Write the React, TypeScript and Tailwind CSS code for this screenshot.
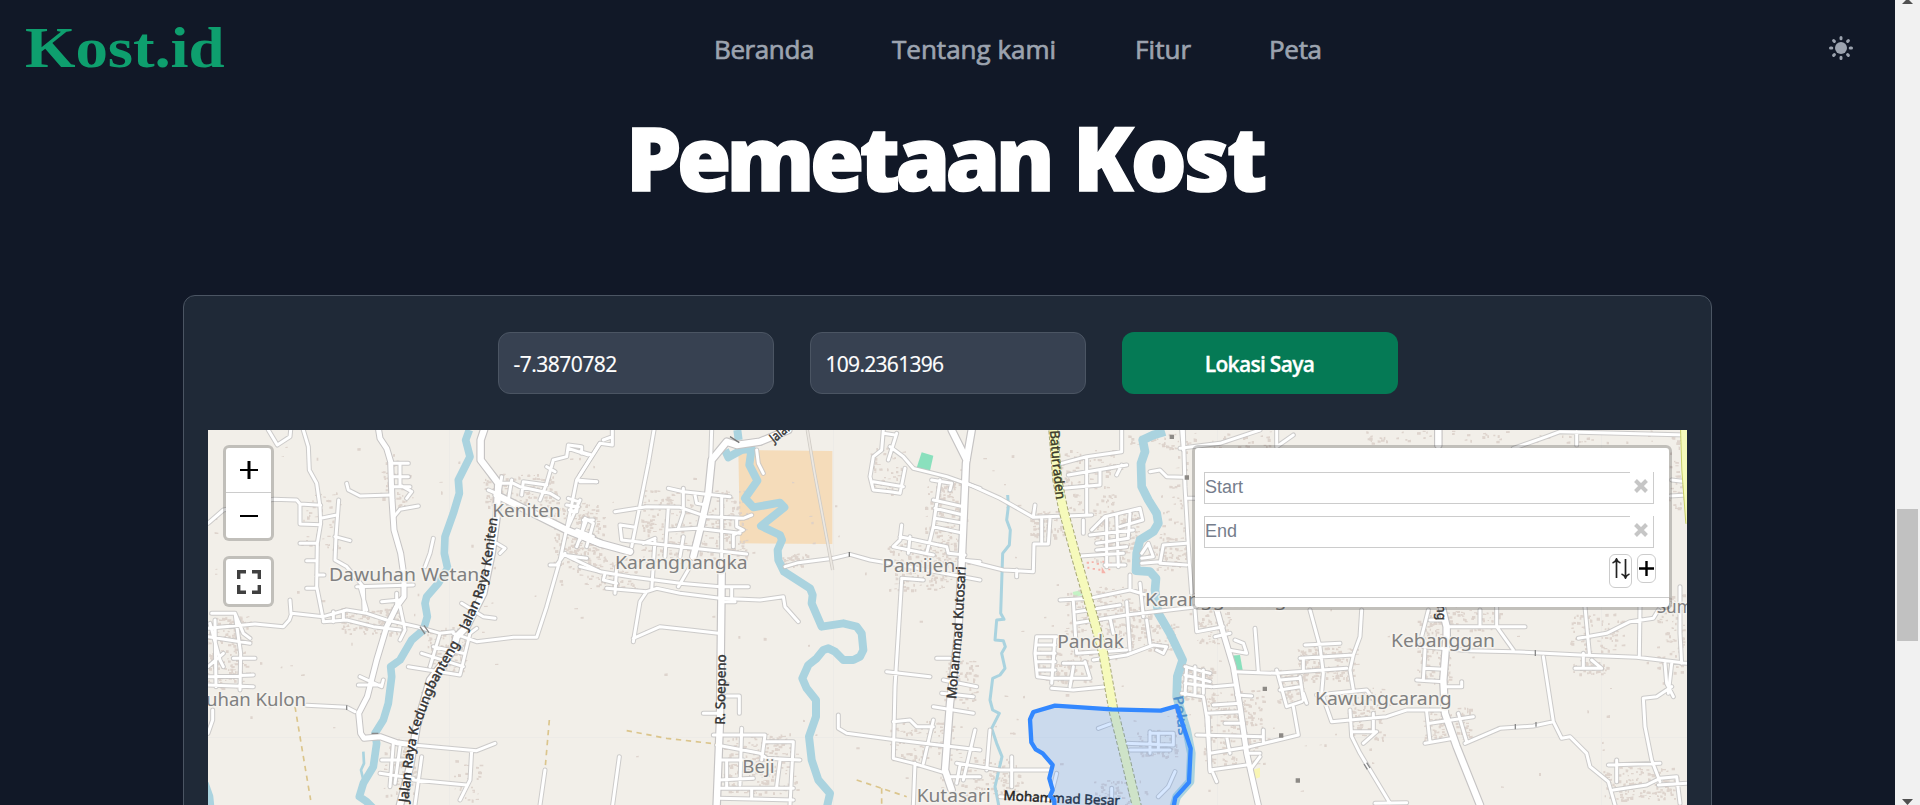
import React from "react";

type Tile = {
  x: number;
  major: string;
  mid: string;
  minor: string;
  towns: [number, number, number, number, number][];
};

const TILES: Tile[] = [
  {
    x: 200,
    major:
      "M852 30L842 60V120L880 170L895 190L890 290L875 400L850 520L800 620L770 650L760 690L690 780L650 920L630 1040L600 1155M890 225L1000 280L1100 330L1200 370",
    mid: "M536 30L540 55L560 85L572 125L576 240L582 330L602 400L612 470V530L590 560L560 620L530 720L502 830L476 880L482 940L492 955L540 950L590 968L640 975",
    minor:
      "M205 30L232 75L270 50L272 30M310 30L325 80L328 150L350 190L360 260L362 310L352 370L350 500L370 600M24 310L70 270L220 238L290 240L300 252L362 256M300 252V312L362 314M362 295L410 285M416 240L408 350L405 420L440 440L490 500L492 570M405 350L450 362M300 370H350M320 422H350M350 465H372M320 505H350M440 190L445 210L480 228L572 225M580 130H625M600 130V195L635 215L620 235M576 170H625M576 200H630M582 290L600 268L655 258M470 500L640 495M545 545L600 540M24 625L165 612L250 620L268 600L275 580L370 590L440 570L500 580L560 600L650 620L720 640L760 635M273 580L270 540M370 605L440 600L520 620L600 630M430 572V600M400 575V605M480 500L500 570M590 520V560M600 560L615 630L600 660M35 580H105L130 640L150 655M30 610L60 720L70 740M24 650L150 670M24 770L160 765M24 795L160 800M105 580L122 700L120 810M45 600L48 800M100 715H165M24 740L70 700M320 856L440 862L465 875M24 940L38 900V870M700 355L690 400L675 440M785 550L850 590L885 595M760 640L830 665L940 652L1010 652L1040 560L1080 420L1110 280L1130 180L1200 70M1130 180L1190 185M1095 400L1070 435H1050M1085 400L1200 455M1105 235L1135 245L1130 275L1108 270M1100 255L1135 260M895 190L940 190L960 200L1050 220L1075 235M970 185L965 225M970 185L1040 195M1040 190L1020 240M1040 190L1060 120L1100 110L1105 75L1145 80V100M1105 85L1165 105M1040 140L1065 155M905 170L895 230M935 180L925 240M865 210L900 225M1100 330L1140 240M1160 300L1130 380M1150 300H1180M1130 330L1180 350M1085 405L1160 415M720 640L690 740M665 700L790 740M625 740L780 765L810 640L830 625M700 680L790 700M890 370L915 385L900 400M640 975L830 992L885 970M815 992L810 1080L780 1140M640 1080L800 1095M580 970L570 1100M540 1060L640 1075M665 1010L645 1155M600 980L585 1090M545 1020H620M1035 1050L1020 1155M480 770L545 800L550 780M475 795H545",
    towns: [
      [590, 190, 50, 70, 30], [360, 300, 60, 90, 25], [80, 690, 70, 110, 90], [510, 600, 90, 40, 70],
      [960, 210, 110, 50, 70], [1130, 350, 70, 100, 80], [740, 690, 60, 70, 60], [600, 1040, 50, 90, 50],
      [800, 1080, 40, 60, 15], [600, 500, 560, 430, 30],
    ],
  },
  {
    x: 580,
    major:
      "M340 410L360 330L385 220L395 120L440 65L470 75L540 65L625 30M425 460L420 900L410 1155M1175 30L1158 130L1155 200L1145 430L1135 640L1110 850L1095 1050L1115 1110M1115 30L1160 120M0 345L60 370L150 395",
    mid: "",
    minor:
      "M222 30L205 130L155 380M97 30V75L60 70L0 165M97 50L70 60M0 95L35 105M0 185H50M395 30L392 120M265 205L310 215L450 230M345 225L350 250L380 255M105 275L200 260L300 262L380 290L490 295L515 285M265 262L255 410M310 205V280L295 325M265 330L350 325L480 340M120 315L125 360L340 385L500 402M120 315L165 322M425 230V460M470 300V320L490 330L460 345V380M190 370L225 355M0 440L60 455L150 470L300 490L420 500H505M80 505L200 515L230 505L300 520L420 535L540 540L610 530L615 560L655 605M200 515L180 545L160 665M160 655L240 620L330 630L415 640M225 360L215 510M110 440L105 520M310 350L300 410M330 440L295 500M75 460L70 480L110 490M455 500V530M430 545H465M15 295L0 360M15 295L40 310L20 380M615 440L655 428L760 415L810 403L870 420L960 435L1200 480M530 90L535 130L550 160M910 30L905 90L880 110L870 170L880 210L930 215M930 80L970 110L1000 145L1100 170L1200 205M950 40L925 120M910 40L945 45M975 145L960 220L930 215M880 185L970 200M1080 180L1060 320L1040 400M1060 240L1150 260M1065 265L1150 285M1065 295L1150 310M1060 320L1150 340M1055 180L1115 190L1110 210M965 315L960 360L940 380L1060 405M960 350L1100 380L1105 400L1155 405M990 350L985 400M1140 420L1200 425M965 480L955 640L945 800L940 1015L1000 1030L1100 1060M965 475L1030 480M920 755L1050 770M775 885V925L800 940L950 960L1200 990M1090 780L1190 800M1085 820L1180 830M1060 860L1180 880M1005 1030L1000 1155M940 905L990 900L1010 920L1060 920M1060 900L1030 1030M1185 930L1150 1080M1110 1070H1200M1070 715H1110M440 828H478V880M370 880H415M400 945L555 945L545 1020M410 975L540 1000L560 1015L660 1020M485 925L480 1095M415 1080L520 1075M415 1020H490M415 1105L640 1105M415 1135L640 1140M555 965H640L630 1155M515 1105V1130M440 1025V1100M600 1020L590 1100M118 1010L98 1155",
    towns: [
      [340, 320, 160, 110, 170], [90, 460, 80, 50, 45], [20, 340, 50, 60, 30], [540, 1030, 110, 90, 120],
      [1010, 440, 90, 70, 70], [920, 150, 50, 70, 25], [1110, 280, 45, 100, 60], [1140, 780, 50, 60, 30],
      [1030, 960, 100, 60, 50], [640, 420, 40, 20, 20], [600, 600, 580, 480, 22],
    ],
  },
  {
    x: 940,
    major: "",
    mid: "",
    minor:
      "M80 190L180 235L280 292L455 285M285 255L280 290M70 420L190 450L280 455L282 372H325L330 295M305 295V365M230 450V470M365 130L440 110L545 95V30M440 110V285M385 165L560 135M370 205L480 195V150M545 135L530 165M455 330L495 290L600 265L608 300L540 320M500 290V440M530 285L535 440M570 280L565 350M450 345L580 330M470 370L565 355M470 390L560 380M420 408L550 400M495 435H555M430 300V340M360 540L450 535L570 510L620 525M570 510V465M400 545L410 700L560 690M405 610L560 585L770 560M510 595L520 640M560 545L570 690M410 575L540 555M600 490L610 590M620 600L630 670M460 720L560 705L640 675L680 680L670 700L650 690M290 650L285 700L292 770L330 775L450 775M290 650H350M290 675H345M290 700H345M290 725H345M290 750H345M345 650L335 790M335 805L400 810L500 800M400 740L390 800M435 725L450 775M370 730H435M730 30L735 200L748 430L755 520M630 155L660 150L680 170L730 172M740 235H765M605 400L625 370L640 410L605 415M670 375L740 370M670 375L660 430L740 435M605 430L660 425M735 740L810 760M735 765L810 785M735 790L815 800M740 740L735 825M765 740V820M790 750V820M725 820L790 830L800 890L810 1055M475 925L510 912M555 970L700 975M570 990L690 990M630 935V1000M655 940V990M630 940H700V975M705 1055L685 1100L655 1130M515 1105V1155M50 1030L180 1050L330 1050M215 1010V1100M150 930L140 1050M180 1130L350 1140M60 1035L50 1090M350 1060L340 1100",
    towns: [
      [440, 180, 90, 90, 60], [320, 310, 50, 40, 40], [530, 350, 70, 80, 90], [500, 570, 130, 70, 100],
      [370, 740, 80, 50, 60], [620, 650, 90, 40, 50], [690, 400, 50, 50, 30], [770, 790, 50, 50, 70],
      [650, 970, 60, 40, 50], [540, 1120, 80, 40, 30], [120, 1070, 120, 60, 60], [0, 330, 50, 150, 45],
      [700, 250, 40, 200, 30], [400, 600, 350, 500, 30],
    ],
  },
  {
    x: 1180,
    major: "M775 30V75M785 560L800 620V650L790 780L795 880L830 980L900 1155",
    mid: "M105 550L130 640L160 740L180 860L200 1000L235 1155",
    minor:
      "M5 30L10 90M0 85L120 70L240 30M290 30V80L340 45M45 570L50 635L130 620M105 650L150 640M145 690L200 700L190 670L165 660M225 625L235 755M160 755L290 760L500 745M290 750L320 860L365 845M360 770L370 840M340 860L355 945L210 980L90 1000M300 780L360 775M300 810L360 800M375 675L480 670M360 715L520 705L510 750L520 810M370 715V755M390 570L420 680L430 760L425 820M545 570L540 650L520 705M425 820L455 905L510 900L620 890L680 870L790 870M510 870L515 950L540 1000L630 1150M580 880V935M515 935H590L550 970M585 1150L680 1148M370 820L380 850M410 825L560 810L590 850M80 880L180 875M100 855L180 850M100 800L160 795M135 910L190 910M50 945L250 950M250 930V970M85 890L90 1050L200 1035M140 950L150 1000M170 825L215 828M205 1000H240M210 1050L240 1010M95 1050L110 1085M805 620H1035M950 560V620L1000 690M900 570V615M725 650L745 570M750 600H790M730 680L870 692L1000 695L1200 705L1370 712L1521 730M735 690L730 780M735 745L790 748M710 780L790 785M800 800L845 800V785M1215 560L1228 700M1380 560L1378 712M1195 655L1280 640L1350 605L1420 595L1435 570M1500 500V640L1505 730M1475 730L1465 820M1455 730L1460 790L1480 830M1475 800L1430 830L1390 835L1395 920L1415 1020L1440 1085M1090 710L1120 905L1145 955L1170 950L1220 1000L1230 1040L1285 1085L1305 1155M855 970L960 925L1060 918L1120 905M740 875L750 965M750 910L880 890M735 970L820 955M835 880L860 965M1285 1035L1440 1030M1310 1020V1085M1300 1110L1400 1095L1440 1075L1490 1070L1500 1150M1435 1095L1521 1090M1185 745H1265L1235 720M1210 700V745M1000 85L1100 50L1140 35L1521 45M1190 35V75M1475 180L1521 185M1470 228L1521 225",
    towns: [
      [100, 620, 50, 50, 35], [160, 920, 90, 110, 110], [330, 800, 40, 50, 40], [440, 730, 90, 50, 90],
      [560, 880, 50, 80, 60], [760, 700, 50, 100, 60], [800, 910, 70, 50, 60], [850, 600, 110, 30, 45],
      [1250, 640, 80, 60, 40], [1470, 640, 40, 120, 50], [1380, 1090, 110, 50, 80], [1230, 740, 50, 20, 20],
      [60, 60, 220, 25, 35], [1490, 160, 25, 110, 25], [1000, 50, 450, 20, 30], [760, 800, 720, 330, 30],
    ],
  },
];

const WATER: [number, number, string][] = [
  [200, 23, "M808 30L797 60L810 110L775 180L778 220L760 280L735 350L733 400L743 445L715 490L680 530L675 550L682 590L670 630L635 660L600 720L572 740L575 770L565 850L550 900L525 940L530 970L520 1040L490 1090L478 1130L500 1145L525 1170"],
  [200, 8, "M490 995L492 1030L483 1050L490 1080"],
  [200, 24, "M14 1090L28 1130L32 1170"],
  [580, 24, "M472 30L476 60M435 90L445 112L485 90L515 85L508 135L532 182L495 235L520 262L600 248L613 262L543 318L600 345L606 360L593 390L595 420L612 455L690 505L698 525L695 550L725 620L790 610L830 620L845 640L850 690L840 710L820 720L790 720L765 695L745 685L730 690L710 715L685 735L667 775L680 805L708 840V890L687 950L695 1020L715 1080L750 1120L740 1165"],
  [940, 26, "M675 35L640 45L608 60L615 95L603 130L605 200L625 240L650 280L655 310L640 335L600 360L590 400L588 452L630 455L648 475L645 510L655 580L690 640L728 720L712 770L710 830L740 930L754 1000L750 1085L710 1130L700 1165"],
  [940, 9, "M203 225L205 260L200 300L211 330L208 375L188 400L182 580L192 598L170 600L165 660L190 662L196 680L185 700L195 745L180 765L158 775L150 840L158 870L178 880L155 925L170 970L186 1010L165 1100L178 1165"],
];

const PLACES: [number, number, number, number, string][] = [
  [200, 877, 290, 205, "Keniten"],
  [200, 387, 482, 451, "Dawuhan Wetan"],
  [200, 18, 857, 300, "uhan Kulon"],
  [580, 105, 447, 398, "Karangnangka"],
  [580, 487, 1060, 97, "Beji"],
  [580, 907, 457, 219, "Pamijen"],
  [580, 1010, 1147, 222, "Kutasari"],
  [940, 352, 683, 200, "Pandak"],
  [940, 615, 557, 425, "Karanggintung"],
  [1180, 633, 680, 312, "Kebanggan"],
  [1180, 405, 855, 410, "Kawungcarang"],
  [1180, 1430, 580, 108, "Sum"],
];

const STREETS: [string, number, string, number, string, string][] = [
  ["keniten", 200, "M802 632L845 540L872 440L893 290", 352, "Jalan Raya Keniten", "#333"],
  ["kedung", 200, "M624 1148L640 1010L655 930L705 800L778 672", 508, "Jalan Raya Kedungbanteng", "#333"],
  ["soepeno", 580, "M434 914L438 703", 211, "R. Soepeno", "#333"],
  ["kutosari", 580, "M1128 838L1146 640L1157 440", 399, "Mohammad Kutosari", "#333"],
  ["jalan", 580, "M582 70L650 15", 75, "Jalan", "#333"],
  ["batur", 940, "M330 32L336 120L349 240", 208, "Baturraden", "#3b3b2a"],
  ["besar", 940, "M190 1140L360 1149L540 1156", 350, "Mohammad Besar", "#222"],
  ["pelus", 940, "M700 830L708 870L716 945", 118, "Pelus", "#4f8fc9"],
  ["ng", 1180, "M772 555L772 602", 46, "ng", "#333"],
];

const IN = "translate(OX 420) scale(0.333333)";
const at = (x: number) => IN.replace("OX", String(x));

function buildings(tile: Tile): string {
  let seed = tile.x * 7 + 13;
  const rnd = () => {
    seed = (seed * 1103515245 + 12345) % 2147483648;
    return seed / 2147483648;
  };
  let d = "";
  for (const [cx, cy, rx, ry, n] of tile.towns) {
    for (let i = 0; i < n * 1.8; i++) {
      const px = Math.round(cx + (rnd() * 2 - 1) * rx);
      const py = Math.round(cy + (rnd() * 2 - 1) * ry);
      const w = Math.round(4 + rnd() * 7);
      const h = Math.round(3 + rnd() * 6);
      d += `M${px} ${py}l${w} ${Math.round(rnd() * 4 - 2)}v${h}h-${w}z`;
    }
  }
  return d;
}

function RoadLayer({ casing }: { casing: boolean }) {
  const stroke = casing ? "#c6c4c4" : "#ffffff";
  return (
    <>
      {TILES.map((t) => (
        <g key={t.x} transform={at(t.x)} stroke={stroke} fill="none" strokeLinejoin="round" strokeLinecap="round">
          <path d={t.minor} strokeWidth={casing ? 15 : 9} opacity={casing ? 0.85 : 1} />
          <path d={t.mid || "M0 0"} strokeWidth={casing ? 21 : 15} />
          <path d={t.major || "M0 0"} strokeWidth={casing ? 26 : 19} />
        </g>
      ))}
    </>
  );
}

function MapCanvas() {
  return (
    <svg className="block h-full w-full" viewBox="208 430 1479 375" preserveAspectRatio="xMinYMin slice">
      <rect x="208" y="430" width="1479" height="375" fill="#f2efe9" />
      <path d="M449.500 430V805M833.500 430V805M1217.500 430V805M1601.500 430V805M208 737.500H1687" stroke="#edebe7" />
      <path transform={at(580)} d="M475 90L757 93V372L480 370Z" fill="#f5dcba" />
      <path transform={at(580)} d="M1025 97L1060 107L1050 152L1010 143Z" fill="#8ae0bd" />
      <path transform={at(940)} d="M870 707L900 705L908 750L882 750Z" fill="#8ae0bd" />
      <path transform={at(940)} d="M398 516L425 510L430 525L402 531Z" fill="#c4f2c5" />
      <path transform={at(940)} d="M935 1050L960 1043V1072L942 1078Z" fill="#f8f5b4" />
      <path
        transform={at(940)}
        d="M440 425h7v6h-7zM455 424h6v5h-6zM470 428h7v6h-7zM487 422h6v6h-6zM510 428h6v6h-6zM442 440h6v6h-6zM458 444h7v5h-7zM475 446h6v6h-6zM485 440l12 20h-12zM505 446h6v5h-6z"
        fill="#f5b3aa"
      />
      {TILES.map((t) => (
        <path key={t.x} transform={at(t.x)} d={buildings(t)} fill="#dbcfc8" opacity="0.85" />
      ))}
      {WATER.map(([x, w, d], i) => (
        <path key={i} transform={at(x)} d={d} fill="none" stroke="#aad3df" strokeWidth={w} strokeLinejoin="round" />
      ))}
      <RoadLayer casing />
      <g fill="none" stroke="#dbc58c" strokeWidth="5" strokeDasharray="16 14">
        <path transform={at(200)} d="M285 860L305 980L332 1140M1048 900L1035 1050" />
        <path transform={at(580)} d="M140 932L260 955L410 972M830 1080L905 1105L980 1130M905 1105V1155" />
      </g>
      <RoadLayer casing={false} />
      <g fill="none">
        <path transform={at(580)} d="M682 30L702 150L758 450" stroke="#d0ccc6" strokeWidth="10" />
        <path transform={at(580)} d="M682 30L702 150L758 450" stroke="#ece8e2" strokeWidth="5" />
        <g transform={at(940)}>
          <path d="M340 30L352 180L370 270L405 400L445 540L490 700L520 870L550 990L592 1165" stroke="#a9aa78" strokeWidth="30" strokeDasharray="12 6" />
          <path d="M340 30L352 180L370 270L405 400L445 540L490 700L520 870L550 990L592 1165" stroke="#f6fabb" strokeWidth="24" />
        </g>
        <path transform={at(1180)} d="M1512 25L1516 150L1528 310" stroke="#c9cf6a" strokeWidth="24" />
        <path transform={at(1180)} d="M1512 25L1516 150L1528 310" stroke="#f6fabb" strokeWidth="18" />
        <path transform={at(200)} d="M660 620L675 642M672 616L687 638M515 940H535M440 856V870" stroke="#888" strokeWidth="4" />
        <path transform={at(1180)} d="M552 1032L562 1048M560 1028L570 1044M1066 690V708M1006 912V928M1068 906V920" stroke="#888" strokeWidth="4" />
        <path transform={at(580)} d="M450 50L478 68M808 396V410" stroke="#777" strokeWidth="4" />
      </g>
      <path
        transform={at(940)}
        d="M689 44h13v13h-13zM734 166h13v13h-13zM968 800h13v13h-13zM1017 940h13v13h-13zM1067 1075h13v13h-13z"
        fill="#8d8a86"
      />
      <g fontFamily='"Noto Sans", sans-serif' strokeLinejoin="round" paintOrder="stroke">
        {STREETS.map(([id, x, d, len, label, color]) => (
          <g key={id} transform={at(x)}>
            <path id={id} d={d} fill="none" stroke="none" />
            <text fontSize="40" fill={color} stroke={color} strokeWidth="1.300">
              <textPath href={`#${id}`} textLength={len} lengthAdjust="spacingAndGlyphs">
                {label}
              </textPath>
            </text>
          </g>
        ))}
        {PLACES.map(([x, px, py, len, label]) => (
          <text
            key={label}
            transform={at(x)}
            x={px}
            y={py}
            fontSize="56"
            fill="#808080"
            stroke="#f6f4f0"
            strokeOpacity="0.85"
            strokeWidth="9"
            textLength={len}
            lengthAdjust="spacingAndGlyphs"
          >
            {label}
          </text>
        ))}
      </g>
      <path
        transform={at(940)}
        d="M345 857L515 868L662 872L710 858L752 985L747 1087L706 1133L698 1175H343V1140L330 1128L338 1110L328 1075L338 1035L308 1000L287 988L274 967L270 898L280 876Z"
        fill="#3388ff"
        fillOpacity="0.2"
        stroke="#3388ff"
        strokeWidth="13"
        strokeLinejoin="round"
      />
    </svg>
  );
}

function Waypoint({ label }: { label: string }) {
  return (
    <div className="flex h-8 w-[450px]">
      <div className="flex-1 border-y border-l border-[#ccc] text-[18px] leading-[29px] text-[#757d8c]">{label}</div>
      <div className="flex w-6 items-center border-r border-b border-[#ccc] pb-1 pl-1">
        <svg width="14" height="14" viewBox="0 0 14 14" stroke="#c6c6c6" strokeWidth="4">
          <path d="M1.500 1.500L12.500 12.500M12.500 1.500L1.500 12.500" />
        </svg>
      </div>
    </div>
  );
}

function RoutingPanel() {
  return (
    <div className="absolute top-[15px] right-[15px] h-[165px] w-[480px] rounded-md border-3 border-black/20 bg-white bg-clip-padding font-['Liberation_Sans',sans-serif]">
      <div className="flex h-[150px] flex-col border-b border-[#ccc] pt-6 pl-[9px]">
        <Waypoint label="Start" />
        <div className="h-3" />
        <Waypoint label="End" />
        <div className="mt-1.5 flex items-start justify-end gap-[5px] pr-[13px]">
          <button className="flex h-[34px] w-[23px] justify-center rounded-md border border-[#ccc] pt-[3px]">
            <svg width="20" height="21" viewBox="0 0 20 21" fill="none" stroke="#222" strokeWidth="1.700">
              <path d="M5.500 20V2M1.500 5Q4.500 4 5.500 1Q6.500 4 9.500 5M14.500 1V19M10.500 16Q13.500 17 14.500 20Q15.500 17 18.500 16" />
            </svg>
          </button>
          <button className="flex h-[29px] w-[19px] items-center justify-center rounded-md border border-[#ccc]">
            <svg width="15" height="15" viewBox="0 0 15 15" stroke="#000" strokeWidth="2.400">
              <path d="M0 7.500H15M7.500 0V15" />
            </svg>
          </button>
        </div>
      </div>
    </div>
  );
}

function MapControls() {
  return (
    <div className="absolute top-[15px] left-[15px] flex flex-col gap-[15px]">
      <div className="flex h-24 w-[51px] flex-col rounded-md border-3 border-black/20 bg-white bg-clip-padding">
        <button className="flex h-[45px] items-center justify-center border-b border-[#ccc] pl-px">
          <svg width="18" height="18" viewBox="0 0 18 18" stroke="#000">
            <path d="M0 9H18" strokeWidth="2" />
            <path d="M9 0V18" strokeWidth="3" />
          </svg>
        </button>
        <button className="flex flex-1 items-center justify-center pl-px">
          <svg width="18" height="18" viewBox="0 0 18 18" stroke="#000">
            <path d="M0 9H18" strokeWidth="2" />
          </svg>
        </button>
      </div>
      <button className="flex h-[51px] w-[51px] items-center justify-center rounded-md border-3 border-black/20 bg-white bg-clip-padding">
        <svg width="24" height="24" viewBox="0 0 24 24" fill="none" stroke="#404040" strokeWidth="3.400">
          <path d="M1.700 9V1.700H9M15 1.700H22.300V9M22.300 15V22.300H15M9 22.300H1.700V15" />
        </svg>
      </button>
    </div>
  );
}

function SunIcon() {
  return (
    <svg className="mb-[2px]" width="24" height="24" viewBox="0 0 24 24" fill="#9ca3af" stroke="#9ca3af" strokeWidth="3" strokeLinecap="round">
      <circle cx="12" cy="12" r="6" stroke="none" />
      <path d="M12 1.500V2.800M12 21.200V22.500M1.500 12H2.800M21.200 12H22.500M4.600 4.600L5.400 5.400M18.600 18.600L19.400 19.400M4.600 19.400L5.400 18.600M18.600 5.400L19.400 4.600" />
    </svg>
  );
}

function Scrollbar() {
  return (
    <div className="flex w-[25px] flex-col items-center bg-[#f1f1f1]">
      <svg className="h-[4px] w-[11px]" viewBox="0 0 11 4" fill="#505050">
        <path d="M0 4L4 0H7L11 4Z" />
      </svg>
      <div className="mt-[505px] h-[132px] w-[21px] bg-[#c1c1c1]" />
      <svg className="mt-auto h-[6px] w-[11px]" viewBox="0 0 11 6" fill="#505050">
        <path d="M0 0H11L5.500 6Z" />
      </svg>
    </div>
  );
}

export default function App() {
  return (
    <div className="flex h-[805px] w-[1920px] overflow-hidden bg-[#111827] font-['Open_Sans','Noto_Sans',sans-serif]">
      <div className="flex min-w-0 flex-1 flex-col">
        <header className="flex h-[98px] shrink-0 items-center pr-[42px] pl-[25px]">
          <div className="w-[689px] pb-[3px]">
            <a className="inline-block origin-left scale-x-[1.16] font-['Liberation_Serif',serif] text-[56px] leading-[64px] font-bold tracking-[-0.1px] text-[#0e9f6e]">
              Kost.id
            </a>
          </div>
          <nav className="flex flex-1 gap-[78px] text-[26px] text-[#9ca3af] [-webkit-text-stroke:0.7px_#9ca3af]">
            <a className="w-[100px] whitespace-nowrap tracking-[-0.4px]">Beranda</a>
            <a className="w-[165px] whitespace-nowrap">Tentang kami</a>
            <a className="w-[56px] whitespace-nowrap tracking-[0.1px]">Fitur</a>
            <a className="whitespace-nowrap tracking-[-0.3px]">Peta</a>
          </nav>
          <SunIcon />
        </header>
        <main className="flex min-h-0 flex-1 flex-col">
          <h1 className="h-[197px] shrink-0 pt-[11px] pl-[626px] text-[88px] leading-[96px] font-extrabold tracking-[-4.700px] whitespace-nowrap text-white [-webkit-text-stroke:1.5px_#fff]">
            Pemetaan <span className="ml-[5px] tracking-[-2.800px]">Kost</span>
          </h1>
          <section className="ml-[183px] flex h-[600px] w-[1529px] shrink-0 flex-col rounded-t-xl border border-[#4b5563] bg-[#1f2937] px-6 pt-9">
            <div className="flex justify-center gap-9 text-[21px] text-white">
              <div className="flex h-[62px] w-[276px] items-center rounded-xl border border-[#4b5563] bg-[#374151] px-[15px] pt-[3px] tracking-[-0.5px] [-webkit-text-stroke:0.2px_#fff]">
                -7.3870782
              </div>
              <div className="flex h-[62px] w-[276px] items-center rounded-xl border border-[#4b5563] bg-[#374151] px-[15px] pt-[3px] tracking-[-0.7px] [-webkit-text-stroke:0.2px_#fff]">
                109.2361396
              </div>
              <button className="h-[62px] w-[276px] rounded-xl bg-[#057a55] pt-[3px] font-semibold tracking-[-0.7px] [-webkit-text-stroke:0.3px_#fff]">
                Lokasi Saya
              </button>
            </div>
            <div className="relative mt-9 h-[375px] w-[1479px] shrink-0 overflow-hidden">
              <MapCanvas />
              <MapControls />
              <RoutingPanel />
            </div>
          </section>
        </main>
      </div>
      <Scrollbar />
    </div>
  );
}
